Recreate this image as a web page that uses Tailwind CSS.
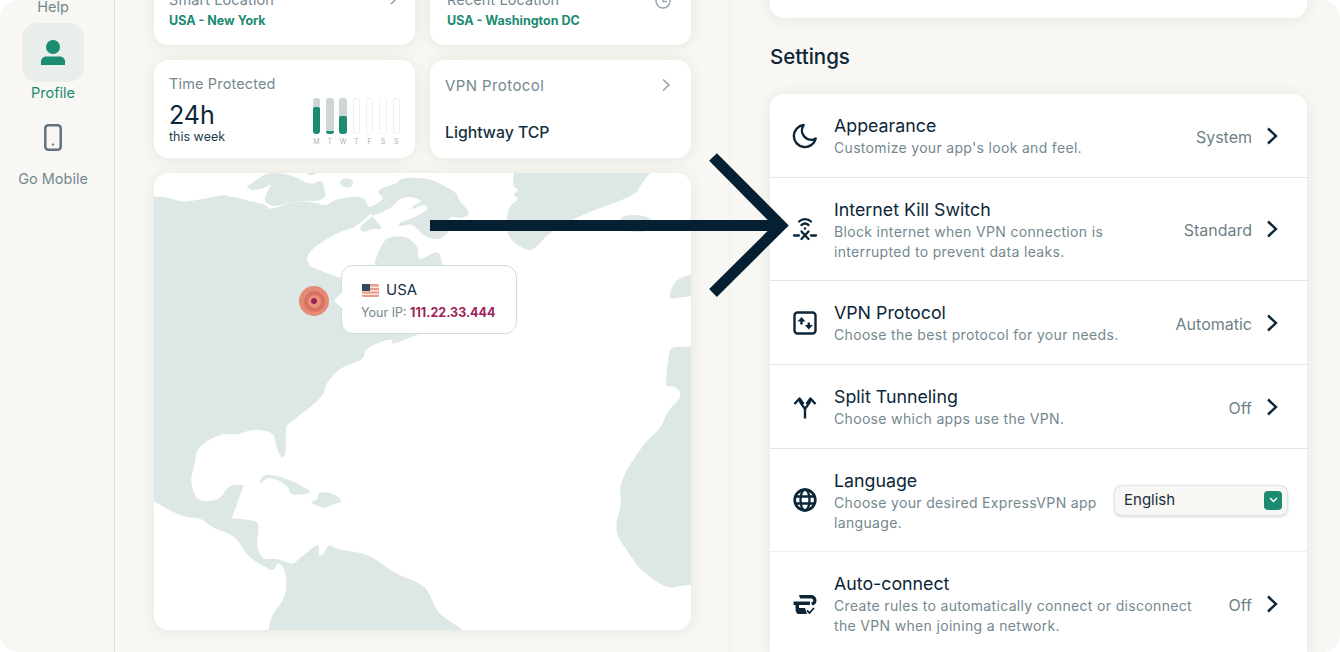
<!DOCTYPE html>
<html lang="en">
<head>
    <meta charset="UTF-8" />
    <meta name="viewport" content="width=device-width, initial-scale=1" />
    <title>Settings</title>
    <script src="https://cdn.jsdelivr.net/npm/@tailwindcss/browser@4"></script>
</head>

<body class="bg-white overflow-hidden font-['Inter',sans-serif] text-[#0c2638]">
<div class="relative w-[1340px] h-[652px] overflow-hidden bg-white">
    <div class="flex h-full rounded-[18px] overflow-hidden bg-[#f8f7f3]">

        <!-- sidebar -->
        <aside class="w-[115px] shrink-0 border-r border-[#d5e4e4] pr-[8px] flex flex-col items-center">
            <div class="text-[14.5px] leading-[18px] text-[#74888f] -mt-[2px] h-[25px]">Help</div>
            <div class="w-[62px] h-[59px] rounded-[15px] bg-[#e9eeeb] flex items-center justify-center">
                <svg width="26" height="28" viewBox="0 0 26 28" fill="#1b8b72">
                    <circle cx="13" cy="8" r="7" />
                    <path d="M1 22.500C1 19.500 3.500 17.500 6.500 17.500H19.500C22.500 17.500 25 19.500 25 22.500V26H1Z" />
                </svg>
            </div>
            <div class="mt-[1px] text-[14.5px] leading-[20px] text-[#1b8b72]">Profile</div>
            <svg class="mt-[21px]" width="18" height="27" viewBox="0 0 18 27" fill="none" stroke="#5f7480" stroke-width="2.500">
                <rect x="1.300" y="1.300" width="15.400" height="24.400" rx="3" />
                <circle cx="9" cy="20.500" r="0.700" fill="#5f7480" stroke-width="1" />
            </svg>
            <div class="mt-[18px] text-[14.5px] leading-[20px] text-[#74888f]">Go Mobile</div>
        </aside>

        <!-- main column -->
        <main class="w-[615px] shrink-0 border-r border-[#efefe9] pl-[39px] pr-[38px] flex flex-col gap-[15px]">
            <div class="grid grid-cols-2 gap-[15px] -mt-[53px]">
                <div class="h-[98px] rounded-[14px] bg-white shadow-[0_1px_14px_rgba(70,80,60,0.1)] px-[15px] pt-[44px] relative">
                    <div class="text-[14.500px] leading-[18px] tracking-[0.1px] text-[#74888f]">Smart Location</div>
                    <div class="mt-[3px] text-[12.500px] leading-[18px] font-bold text-[#1b8b72]">USA - New York</div>
                    <svg class="absolute right-[17px] top-[44px]" width="16" height="16" viewBox="0 0 16 16" fill="none" stroke="#93a3a8" stroke-width="1.500">
                        <path d="M1 8H14M9 3L14 8L9 13" />
                    </svg>
                </div>
                <div class="h-[98px] rounded-[14px] bg-white shadow-[0_1px_14px_rgba(70,80,60,0.1)] px-[17px] pt-[44px] relative">
                    <div class="text-[14.500px] leading-[18px] tracking-[0.1px] text-[#74888f]">Recent Location</div>
                    <div class="mt-[3px] text-[12.500px] leading-[18px] font-bold text-[#1b8b72]">USA - Washington DC</div>
                    <svg class="absolute right-[20px] top-[46px]" width="16" height="16" viewBox="0 0 16 16" fill="none" stroke="#93a3a8" stroke-width="1.400">
                        <circle cx="8" cy="8" r="7" />
                        <path d="M8 4V8.500H12" />
                    </svg>
                </div>
                <div class="h-[98px] rounded-[14px] bg-white shadow-[0_1px_14px_rgba(70,80,60,0.1)] px-[15px] pt-[15px] relative flex justify-between">
                    <div>
                        <div class="text-[14.500px] leading-[18px] tracking-[0.15px] text-[#74888f]">Time Protected</div>
                        <div class="mt-[7px] text-[25px] leading-[30px]">24h</div>
                        <div class="-mt-[1px] text-[12.500px] leading-[16px] text-[#24404f]">this week</div>
                    </div>
                    <div class="flex gap-[5.800px] pt-[23px]">
                        <div class="w-[7.500px]"><div class="h-[36px] rounded-[3px] bg-[#cdd5d7] flex flex-col justify-end overflow-hidden"><div class="h-[27px] rounded-[2px] bg-[#1b8b72]"></div></div><div class="mt-[3px] text-center text-[7px] leading-[9px] text-[#a7b3b7]">M</div></div>
                        <div class="w-[7.500px]"><div class="h-[36px] rounded-[3px] bg-[#cdd5d7] flex flex-col justify-end overflow-hidden"><div class="h-[3px] bg-[#1b8b72]"></div></div><div class="mt-[3px] text-center text-[7px] leading-[9px] text-[#a7b3b7]">T</div></div>
                        <div class="w-[7.500px]"><div class="h-[36px] rounded-[3px] bg-[#cdd5d7] flex flex-col justify-end overflow-hidden"><div class="h-[18px] rounded-[2px] bg-[#1b8b72]"></div></div><div class="mt-[3px] text-center text-[7px] leading-[9px] text-[#a7b3b7]">W</div></div>
                        <div class="w-[7.500px]"><div class="h-[36px] rounded-[3px] border border-dotted border-[#dde1e1]"></div><div class="mt-[3px] text-center text-[7px] leading-[9px] text-[#a7b3b7]">T</div></div>
                        <div class="w-[7.500px]"><div class="h-[36px] rounded-[3px] border border-dotted border-[#dde1e1]"></div><div class="mt-[3px] text-center text-[7px] leading-[9px] text-[#a7b3b7]">F</div></div>
                        <div class="w-[7.500px]"><div class="h-[36px] rounded-[3px] border border-dotted border-[#dde1e1]"></div><div class="mt-[3px] text-center text-[7px] leading-[9px] text-[#a7b3b7]">S</div></div>
                        <div class="w-[7.500px]"><div class="h-[36px] rounded-[3px] border border-dotted border-[#dde1e1]"></div><div class="mt-[3px] text-center text-[7px] leading-[9px] text-[#a7b3b7]">S</div></div>
                    </div>
                </div>
                <div class="h-[98px] rounded-[14px] bg-white shadow-[0_1px_14px_rgba(70,80,60,0.1)] px-[15px] pt-[17px] relative">
                    <div class="text-[15px] leading-[18px] tracking-[0.4px] text-[#74888f]">VPN Protocol</div>
                    <div class="mt-[28px] text-[15.800px] leading-[20px] font-medium text-[#17303f]">Lightway TCP</div>
                    <svg class="absolute right-[20px] top-[18px]" width="10" height="14" viewBox="0 0 10 14" fill="none" stroke="#93a3a8" stroke-width="1.600">
                        <path d="M2 1.500L8 7L2 12.500" />
                    </svg>
                </div>
            </div>

            <!-- map -->
            <div class="relative h-[457px] rounded-[14px] overflow-hidden bg-white shadow-[0_1px_14px_rgba(70,80,60,0.1)]">
                <svg id="map" class="absolute -left-[4px] -top-[3px]" width="545" height="465" viewBox="0 0 1568 1395" preserveAspectRatio="none" fill="#dce7e6">
                    <path data-p="-46,79 11,79 50,82 88,95 112,94 165,84 218,74 227,81 246,81 290,94 333,104 342,114 328,114 357,117 376,107 405,97 462,94 510,109 520,94 563,81 611,79 625,99 633,121 635,134 587,174 558,181 510,204 448,252 457,289 491,301 510,309 552,327 600,320 650,287 644,279 673,209 697,199 740,199 774,234 769,259 779,271 831,237 841,284 845,290 960,320 900,440 770,493 690,527 702,505 650,520 618,540 615,570 550,590 505,640 500,680 400,760 390,770 392,850 380,868 362,830 358,790 325,780 290,778 250,795 205,790 135,830 130,880 115,930 130,985 160,997 205,985 225,945 270,945 270,945 235,1045 235,1045 300,1050 315,1065 305,1130 325,1170 355,1165 385,1172 410,1185 430,1165 490,1115 483,1155 495,1160 515,1120 540,1140 630,1150 700,1210 780,1240 805,1270 825,1330 905,1380 960,1460 340,1460 340,1380 350,1335 385,1290 395,1240 385,1190 368,1175 355,1205 330,1190 280,1160 245,1095 180,1075 145,1042 100,1045 12,995 -60,960" />
                    <g transform="translate(11.5 9) scale(0.959 1)">
                        <path data-p="278,42 278,42 325,8 345,0 410,3 470,38 505,18 512,55 517,70 495,85 420,85 375,97 358,100 335,90 330,75 352,35 352,35 300,55" />
                        <path data-p="450,-8 500,-8 470,12" />
                        <path data-p="555,28 570,13 600,20 592,44 570,44" />
                        <path data-p="640,105 640,105 665,95 692,75 670,60 680,45 735,30 735,15 820,13 885,45 912,65 915,85 952,120 925,137 893,128 878,145 890,170 870,190 855,202 810,190 775,150 735,162 733,150 790,130 828,105 805,93 773,112 775,98 808,85 775,70 735,75 720,100 660,130 650,125" />
                        <path data-p="612,165 655,130 655,130 690,172 660,165 630,179" />
                    </g>
                    <path data-p="1055,-30 1040,50 1065,60 1040,75 1065,85 1030,110 1025,170 1035,210 1085,243 1110,235 1150,185 1250,130 1400,75 1410,45 1470,-30" />
                    <path data-p="1345,152 1370,132 1445,140 1455,185 1360,185" />
                    <path data-p="1490,390 1505,340 1530,320 1620,300 1620,375 1530,380" />
                    <path data-p="1495,530 1530,530 1620,528 1620,1245 1530,1245 1490,1258 1410,1200 1385,1160 1350,1110 1338,1065 1358,1000 1348,940 1420,820 1470,775 1490,720 1532,680 1515,650 1490,650 1483,640 1488,590" />
                    <path data-p="315,948 320,918 345,912 400,928 440,950 470,968 430,975 403,974 398,948 360,925 330,925" />
                    <path data-p="458,998 485,988 482,966 525,968 558,996 530,1000 500,1016 480,1006" />
                </svg>
                <div class="absolute left-[145px] top-[113px] w-[30px] h-[30px] rounded-full bg-[#e58a74] flex items-center justify-center">
                    <div class="w-[21px] h-[21px] rounded-full bg-[#d87264] flex items-center justify-center">
                        <div class="w-[13px] h-[13px] rounded-full bg-[#e9957c] flex items-center justify-center">
                            <div class="w-[6px] h-[6px] rounded-full bg-[#9c2358]"></div>
                        </div>
                    </div>
                </div>
                <div class="absolute left-[187px] top-[92px] w-[176px] h-[69px] rounded-[12px] bg-white border border-[#cfdcdc] pl-[19px] pt-[14px]">
                    <div class="absolute -left-[6px] top-[29px] w-[11px] h-[11px] rotate-45 bg-white"></div>
                    <div class="flex items-center gap-[7px] ml-[1px]">
                        <svg width="17" height="13" viewBox="0 0 17 13">
                            <rect width="17" height="13" rx="1.500" fill="#eb9a8a" />
                            <rect y="2.500" width="17" height="1.500" fill="#fbe6e0" />
                            <rect y="6" width="17" height="1.500" fill="#fbe6e0" />
                            <rect y="9.500" width="17" height="1.500" fill="#fbe6e0" />
                            <rect width="8" height="7" fill="#34495c" />
                        </svg>
                        <span class="text-[15px] leading-[20px] text-[#17303f]">USA</span>
                    </div>
                    <div class="mt-[5px] text-[12.500px] leading-[16px] text-[#74888f]">Your IP: <span class="font-bold text-[#9c2358]">111.22.33.444</span></div>
                </div>
            </div>
        </main>

        <!-- settings -->
        <section class="flex-1 pl-[40px] pr-[33px]">
            <div class="h-[60px] -mt-[42px] rounded-[14px] bg-white shadow-[0_1px_14px_rgba(70,80,60,0.1)]"></div>
            <h2 class="mt-[25px] h-[28px] text-[20.500px] leading-[28px] font-medium text-[#0c2638]">Settings</h2>
            <div class="mt-[23px] rounded-t-[14px] bg-white shadow-[0_1px_14px_rgba(70,80,60,0.1)]">

                <div class="h-[84px] border-b border-[#dde7e6] flex items-center pl-[21px] pr-[29px]">
                    <svg class="shrink-0 w-[28px] h-[28px]" viewBox="0 0 24 24" fill="none" stroke="#0c2638" stroke-width="2.100" stroke-linejoin="round"><path d="M21.200 14.200A9.500 9.500 0 1 1 10.800 2.600A8 8 0 0 0 21.200 14.200Z" /></svg>
                    <div class="ml-[15px] pt-[2px] flex-1">
                        <div class="text-[17.800px] leading-[22px]">Appearance</div>
                        <div class="mt-[1px] text-[14px] leading-[20px] tracking-[0.32px] text-[#74888f]">Customize your app's look and feel.</div>
                    </div>
                    <span class="mt-[2px] text-[16px] text-[#6d8188]">System</span>
                    <svg class="ml-[14px]" width="12" height="18" viewBox="0 0 12 18" fill="none" stroke="#0c2638" stroke-width="2.400"><path d="M2 1.500L10 9L2 16.500" /></svg>
                </div>

                <div class="h-[103px] border-b border-[#dde7e6] flex items-center pl-[21px] pr-[29px]">
                    <svg class="shrink-0 w-[28px] h-[28px]" viewBox="0 0 28 28" fill="none" stroke="#0c2638" stroke-width="2.300" stroke-linecap="round">
                        <path d="M8 6.500A9 9 0 0 1 20 6.500M10.500 10A5.500 5.500 0 0 1 17.500 10" />
                        <circle cx="14" cy="13.500" r="1.300" fill="#0c2638" stroke="none" />
                        <path d="M10.500 16.500L17.500 24M17.500 16.500L10.500 24M3 20.500H8M20 20.500H25" />
                    </svg>
                    <div class="ml-[15px] pt-[2px] flex-1">
                        <div class="text-[17.800px] leading-[22px]">Internet Kill Switch</div>
                        <div class="mt-[1px] text-[14px] leading-[20px] tracking-[0.33px] text-[#74888f]">Block internet when VPN connection is<br>interrupted to prevent data leaks.</div>
                    </div>
                    <span class="mt-[2px] text-[16px] text-[#6d8188]">Standard</span>
                    <svg class="ml-[14px]" width="12" height="18" viewBox="0 0 12 18" fill="none" stroke="#0c2638" stroke-width="2.400"><path d="M2 1.500L10 9L2 16.500" /></svg>
                </div>

                <div class="h-[84px] border-b border-[#dde7e6] flex items-center pl-[21px] pr-[29px]">
                    <svg class="shrink-0 w-[28px] h-[28px]" viewBox="0 0 28 28" fill="none" stroke="#0c2638" stroke-width="2.400">
                        <rect x="3.500" y="3.500" width="21" height="21" rx="3" />
                        <path d="M10.500 15.500V11" />
                        <path d="M10.500 8L14.500 12.500H6.500Z" fill="#0c2638" stroke="none" />
                        <path d="M17.800 13.500V17.500" />
                        <path d="M17.800 20.500L13.800 16H21.800Z" fill="#0c2638" stroke="none" />
                    </svg>
                    <div class="ml-[15px] pt-[2px] flex-1">
                        <div class="text-[17.800px] leading-[22px]">VPN Protocol</div>
                        <div class="mt-[1px] text-[14px] leading-[20px] tracking-[0.33px] text-[#74888f]">Choose the best protocol for your needs.</div>
                    </div>
                    <span class="mt-[2px] text-[16px] text-[#6d8188]">Automatic</span>
                    <svg class="ml-[14px]" width="12" height="18" viewBox="0 0 12 18" fill="none" stroke="#0c2638" stroke-width="2.400"><path d="M2 1.500L10 9L2 16.500" /></svg>
                </div>

                <div class="h-[84px] border-b border-[#dde7e6] flex items-center pl-[21px] pr-[29px]">
                    <svg class="shrink-0 w-[28px] h-[28px]" viewBox="0 0 28 28" fill="none" stroke="#0c2638" stroke-width="2.400">
                        <path d="M14 25.500V17C14 13.500 9.500 12 8.500 7M14 17C14 13.500 18.500 12 19.500 7" />
                        <path d="M3.500 11L8.500 5.500L12.500 11M24.500 11L19.500 5.500L15.500 11" stroke-linejoin="round" />
                    </svg>
                    <div class="ml-[15px] pt-[2px] flex-1">
                        <div class="text-[17.800px] leading-[22px]">Split Tunneling</div>
                        <div class="mt-[1px] text-[14px] leading-[20px] tracking-[0.33px] text-[#74888f]">Choose which apps use the VPN.</div>
                    </div>
                    <span class="mt-[2px] text-[16px] text-[#6d8188]">Off</span>
                    <svg class="ml-[14px]" width="12" height="18" viewBox="0 0 12 18" fill="none" stroke="#0c2638" stroke-width="2.400"><path d="M2 1.500L10 9L2 16.500" /></svg>
                </div>

                <div class="h-[103px] border-b border-[#f0efe9] flex items-center pl-[21px] pr-[19px]">
                    <svg class="shrink-0 w-[28px] h-[28px]" viewBox="0 0 28 28" fill="none" stroke="#0c2638" stroke-width="2.300">
                        <circle cx="14" cy="14" r="10.300" stroke-width="2.700" />
                        <ellipse cx="14" cy="14" rx="4.500" ry="10.500" />
                        <path d="M4 10.500H24M4 17.500H24" />
                    </svg>
                    <div class="ml-[15px] pt-[2px] flex-1">
                        <div class="text-[17.800px] leading-[22px]">Language</div>
                        <div class="mt-[1px] text-[14px] leading-[20px] tracking-[0.33px] text-[#74888f]">Choose your desired ExpressVPN app<br>language.</div>
                    </div>
                    <div class="w-[174px] h-[31px] rounded-[8px] bg-[#f8f7f3] border border-[#dbe6e5] shadow-[0_1px_3px_rgba(60,90,90,0.2)] flex items-center justify-between pl-[9px] pr-[5px]">
                        <span class="text-[15px] text-[#17303f]">English</span>
                        <span class="w-[18px] h-[19px] rounded-[4px] bg-[#1b8b72] flex items-center justify-center">
                            <svg width="9" height="6" viewBox="0 0 9 6" fill="none" stroke="white" stroke-width="1.500"><path d="M1 1L4.500 4.500L8 1" /></svg>
                        </span>
                    </div>
                </div>

                <div class="h-[103px] flex items-center pl-[21px] pr-[29px]">
                    <svg class="shrink-0 w-[28px] h-[28px]" viewBox="0 0 28 28" fill="#0c2638">
                        <path d="M8 5H20C23.500 5 25.500 7.500 25.500 10.500C25.500 13 24 15 21.500 15.500L20 12.500C21.500 12.500 22.200 11.500 22.200 10.500C22.200 9.200 21.500 8.500 20 8.500H9Z" />
                        <path d="M2.500 11.500H19V15H8V18H14L16 24H8C5.500 24 4.500 22 4.500 18V15H2.500Z" />
                        <path d="M16 20.500L18.500 23L23 18" fill="none" stroke="#0c2638" stroke-width="1.800" />
                    </svg>
                    <div class="ml-[15px] pt-[1px] flex-1">
                        <div class="text-[17.800px] leading-[22px]">Auto-connect</div>
                        <div class="mt-[1px] text-[14px] leading-[20px] tracking-[0.33px] text-[#74888f]">Create rules to automatically connect or disconnect<br>the VPN when joining a network.</div>
                    </div>
                    <span class="mt-[2px] text-[16px] text-[#6d8188]">Off</span>
                    <svg class="ml-[14px]" width="12" height="18" viewBox="0 0 12 18" fill="none" stroke="#0c2638" stroke-width="2.400"><path d="M2 1.500L10 9L2 16.500" /></svg>
                </div>
            </div>
        </section>
    </div>

    <!-- annotation arrow over the page -->
    <svg class="absolute left-0 top-0 pointer-events-none" width="1340" height="652" viewBox="0 0 1340 652" fill="none" stroke="#062033" stroke-width="11">
        <path d="M430 225.500H780" />
        <path d="M713 157L781 225.500L713 293" stroke-miterlimit="10" />
    </svg>
</div>

<script>
    // round off the coastlines: each point becomes a curve control, midpoints are on the line
    document.querySelectorAll('#map path').forEach(function (path) {
        const pts = path.dataset.p.split(' ').map(p => p.split(',').map(Number));
        const mid = (a, b) => [(a[0] + b[0]) / 2, (a[1] + b[1]) / 2];
        let d = 'M' + mid(pts[pts.length - 1], pts[0]).join(',');
        pts.forEach(function (p, i) {
            d += ' Q' + p.join(',') + ' ' + mid(p, pts[(i + 1) % pts.length]).join(',');
        });
        path.setAttribute('d', d + 'Z');
    });
</script>
</body>
</html>
